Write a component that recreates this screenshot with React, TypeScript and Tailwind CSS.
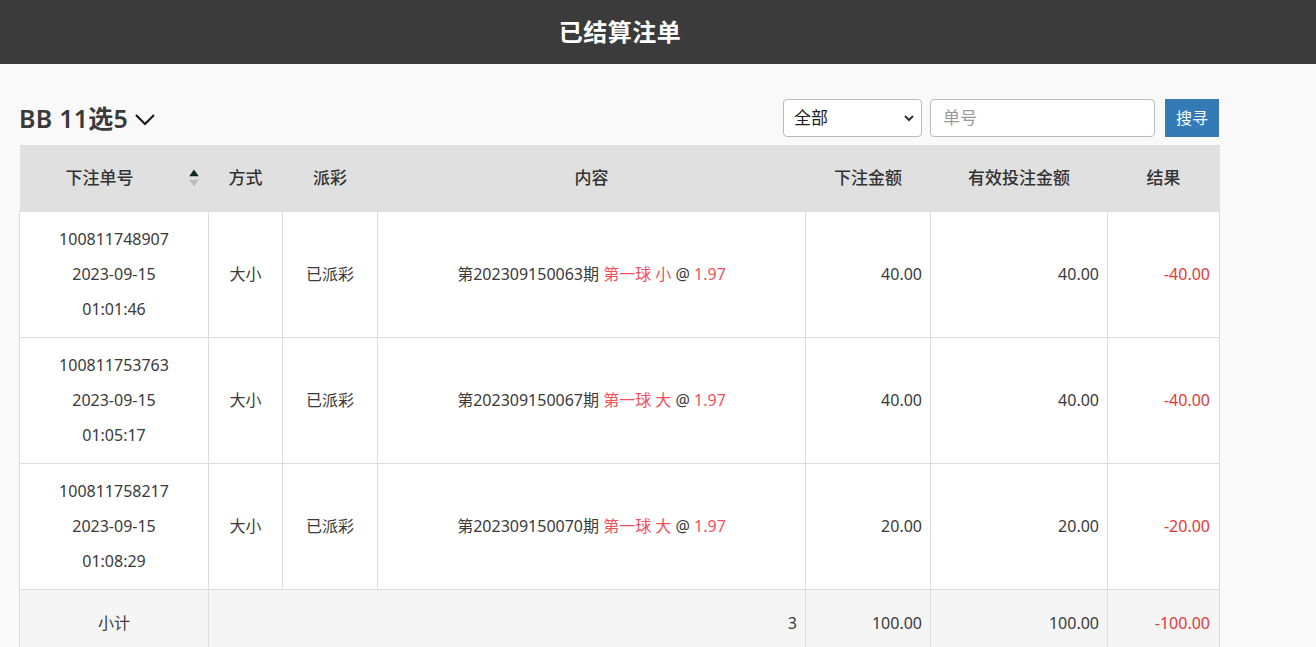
import React from "react";

interface Bet {
  id: string;
  date: string;
  time: string;
  method: string;
  status: string;
  issue: string;
  pick: string;
  odds: string;
  amount: string;
  valid: string;
  result: string;
}

const BETS: Bet[] = [
  { id: "100811748907", date: "2023-09-15", time: "01:01:46", method: "大小", status: "已派彩", issue: "202309150063", pick: "第一球 小", odds: "1.97", amount: "40.00", valid: "40.00", result: "-40.00" },
  { id: "100811753763", date: "2023-09-15", time: "01:05:17", method: "大小", status: "已派彩", issue: "202309150067", pick: "第一球 大", odds: "1.97", amount: "40.00", valid: "40.00", result: "-40.00" },
  { id: "100811758217", date: "2023-09-15", time: "01:08:29", method: "大小", status: "已派彩", issue: "202309150070", pick: "第一球 大", odds: "1.97", amount: "20.00", valid: "20.00", result: "-20.00" },
];

const FONT = { fontFamily: '"Noto Sans", "Noto Sans CJK SC", sans-serif' };

export default function App() {
  return (
    <div className="min-h-screen bg-[#f9f9f9] text-[#3a3a3a]" style={FONT}>
      {/* Top bar */}
      <div className="h-16 bg-[#3b3b3b]">
        <div className="w-[1240px] h-16 flex items-center justify-center">
          <h1 className="text-[24px] font-bold text-white tracking-[0.02em]">已结算注单</h1>
        </div>
      </div>

      <div className="w-[1240px] pl-[19px] pr-[21px] pt-[35px]">
        {/* Toolbar */}
        <div className="flex items-center h-[38px] mb-2">
          <div className="flex items-center gap-[6px] flex-1">
            <span className="text-[25px] font-semibold text-[#3a3a3a] leading-none tracking-[0.01em]">BB 11选5</span>
            <svg width="22" height="14" viewBox="0 0 22 14" className="mt-1">
              <path d="M2 2 L11 11 L20 2" fill="none" stroke="#111" strokeWidth="2" />
            </svg>
          </div>
          <div className="w-[139px] h-[38px] bg-white border border-[#bbb] rounded-[4px] flex items-center justify-between pl-[10px] pr-[6px] text-[17px] text-[#222]">
            <span>全部</span>
            <svg width="12" height="8" viewBox="0 0 12 8">
              <path d="M2 2 L6 6 L10 2" fill="none" stroke="#333" strokeWidth="2" />
            </svg>
          </div>
          <div className="ml-2 w-[225px] h-[38px] bg-white border border-[#bbb] rounded-[4px] flex items-center px-[12px] text-[17px] text-[#999]">
            单号
          </div>
          <button className="ml-[10px] w-[54px] h-[38px] bg-[#337ab7] text-white text-[16px]">搜寻</button>
        </div>

        {/* Table */}
        <table className="w-[1200px] border-collapse text-[16px] table-fixed">
          <colgroup>
            <col className="w-[189px]" />
            <col className="w-[74px]" />
            <col className="w-[95px]" />
            <col className="w-[428px]" />
            <col className="w-[125px]" />
            <col className="w-[177px]" />
            <col className="w-[112px]" />
          </colgroup>
          <thead>
            <tr className="h-[66px] bg-[#e0e0e0] text-[17px] text-[#333]">
              <th className="relative font-medium text-center pr-[29px]">
                下注单号
                <span className="absolute right-[10px] top-1/2 -translate-y-1/2 flex flex-col gap-[3px]">
                  <svg width="10" height="7" viewBox="0 0 10 7"><path d="M5 0 L10 7 L0 7 Z" fill="#0f2a2a" /></svg>
                  <svg width="10" height="7" viewBox="0 0 10 7"><path d="M0 0 L10 0 L5 7 Z" fill="#bdbdbd" /></svg>
                </span>
              </th>
              <th className="font-medium text-center">方式</th>
              <th className="font-medium text-center">派彩</th>
              <th className="font-medium text-center">内容</th>
              <th className="font-medium text-center">下注金额</th>
              <th className="font-medium text-center">有效投注金额</th>
              <th className="font-medium text-center">结果</th>
            </tr>
          </thead>
          <tbody>
            {BETS.map((b) => (
              <tr key={b.id} className="h-[126px] bg-white">
                <td className="border border-[#ddd] text-center leading-[35px]">
                  <div>{b.id}</div>
                  <div>{b.date}</div>
                  <div>{b.time}</div>
                </td>
                <td className="border border-[#ddd] text-center">{b.method}</td>
                <td className="border border-[#ddd] text-center">{b.status}</td>
                <td className="border border-[#ddd] text-center">
                  第{b.issue}期 <span className="text-[#f2505c]">{b.pick}</span> @ <span className="text-[#f2505c]">{b.odds}</span>
                </td>
                <td className="border border-[#ddd] text-right pr-2">{b.amount}</td>
                <td className="border border-[#ddd] text-right pr-2">{b.valid}</td>
                <td className="border border-[#ddd] text-right pr-[9px] text-[#e53935]">{b.result}</td>
              </tr>
            ))}
            <tr className="h-[68px] bg-[#f5f5f5]">
              <td className="border border-[#ddd] text-center">小计</td>
              <td colSpan={3} className="border border-[#ddd] text-right pr-2">3</td>
              <td className="border border-[#ddd] text-right pr-2">100.00</td>
              <td className="border border-[#ddd] text-right pr-2">100.00</td>
              <td className="border border-[#ddd] text-right pr-[9px] text-[#e53935]">-100.00</td>
            </tr>
          </tbody>
        </table>
      </div>
    </div>
  );
}
